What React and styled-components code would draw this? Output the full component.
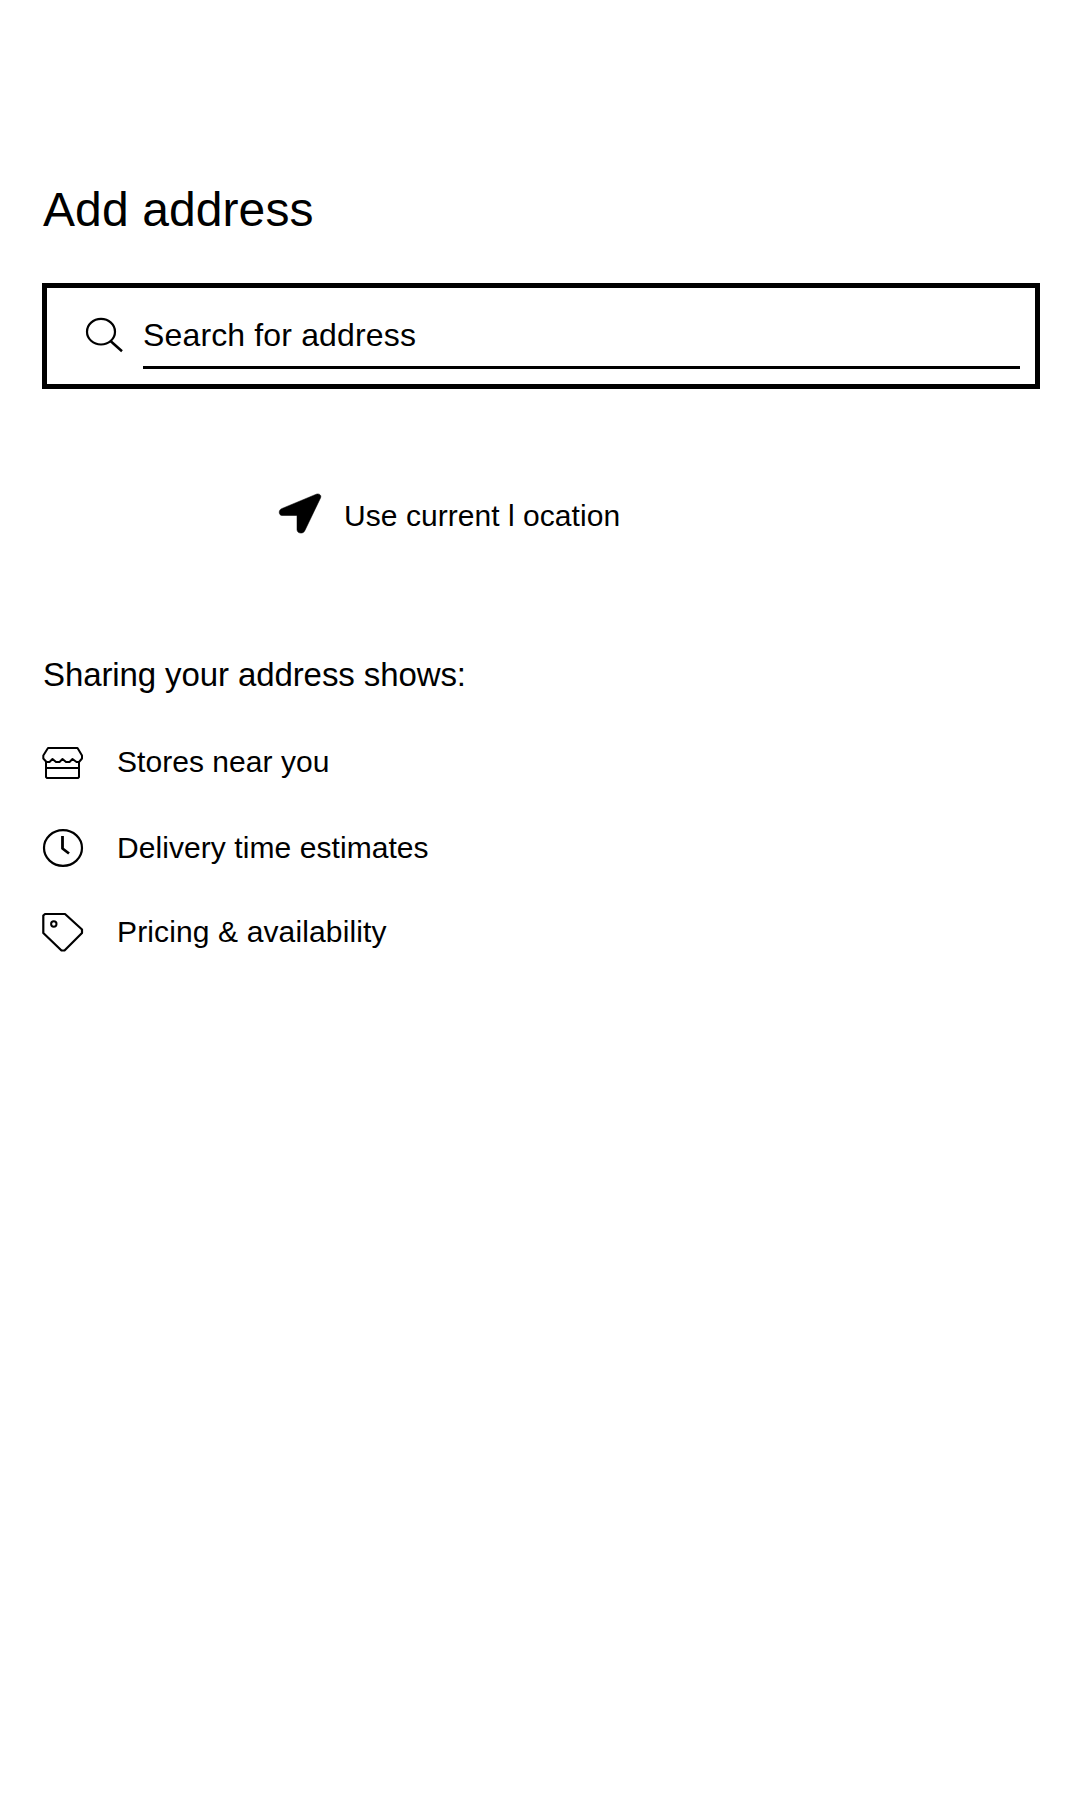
import React from "react";
import styled, { createGlobalStyle } from "styled-components";

const GlobalStyle = createGlobalStyle`
  * { box-sizing: border-box; }
  body { margin: 0; background: #fff; }
`;

const Page = styled.main`
  display: flex;
  flex-direction: column;
  min-height: 1800px;
  padding: 182px 40px 0 42px;
  background: #fff;
  color: #000;
  font-family: "Liberation Sans", Arial, sans-serif;
`;

const Title = styled.h1`
  margin: 0 0 45px 1px;
  font-size: 48px;
  line-height: 56px;
  font-weight: 400;
  letter-spacing: 0.1px;
  white-space: nowrap;
`;

const SearchBox = styled.div`
  display: flex;
  align-items: flex-start;
  gap: 20px;
  height: 106px;
  padding: 29px 15px 0 38px;
  border: 5px solid #000;
`;

const SearchField = styled.div`
  flex: 1;
  height: 52px;
  border-bottom: 3px solid #000;
`;

const Label = styled.span`
  display: block;
  font-size: ${(p) => p.$size || 30}px;
  line-height: 36px;
  letter-spacing: ${(p) => p.$spacing || 0}px;
  white-space: nowrap;
`;

const LocationButton = styled.button`
  display: flex;
  align-items: flex-start;
  gap: 23px;
  margin: 104px 0 0 237px;
  padding: 0;
  border: 0;
  background: none;
  color: inherit;
  font-family: inherit;
  text-align: left;
  height: 41px;

  ${Label} { margin-top: 5px; }
`;

const Subtitle = styled.h2`
  margin: 122px 0 0 1px;
  font-size: 33px;
  line-height: 38px;
  font-weight: 400;
  letter-spacing: -0.1px;
  white-space: nowrap;
`;

const Benefits = styled.ul`
  display: flex;
  flex-direction: column;
  margin: 52px 0 0;
  padding: 0;
  list-style: none;
`;

const Benefit = styled.li`
  display: flex;
  align-items: flex-start;
  gap: 33px;
  height: ${(p) => p.$height}px;

  ${Label} { margin-top: ${(p) => p.$drop}px; }
`;

const Icon = styled.svg`
  display: block;
  flex: none;
  overflow: visible;
  fill: none;
  stroke: #000;
  stroke-width: 2.2;
  stroke-linejoin: round;
`;

const SearchIcon = () => (
  <Icon width="38" height="36" viewBox="0 0 38 36">
    <ellipse cx="16" cy="14.7" rx="14" ry="12.8" />
    <path d="M25.5 24L37 34.3" strokeWidth="2.5" />
  </Icon>
);

const ArrowIcon = () => (
  <Icon width="42" height="41" viewBox="0 0 42 41">
    <path
      d="M37.3 1.2L2.5 15.7C-.8 17.2-.3 22.5 3 22.5H18V36.5C18 40.8 24.3 41.3 25.8 37.7L41.5 5C42.8 2.2 40.2 .2 37.3 1.2Z"
      fill="#000"
      stroke="#000"
      strokeWidth="0.5"
    />
  </Icon>
);

const StoreIcon = () => (
  <Icon width="42" height="34" viewBox="0 0 42 34">
    <path
      d="M6 2H35.5L40 9.5V12.5L37 16H34.5L30.5 13L27.5 16H24L20.5 13L17.5 16H14L10.5 13L7.5 16H4.5L1.3 12.5V9.5Z"
      strokeWidth="2"
    />
    <path d="M4 16V31L5 32H36L37 31V16M4 22H37" strokeWidth="2" />
  </Icon>
);

const ClockIcon = () => (
  <Icon width="42" height="40" viewBox="0 0 42 40">
    <ellipse cx="21" cy="20" rx="19" ry="17.8" />
    <path d="M20.5 8V20.5L27 25.5" strokeWidth="2.8" />
  </Icon>
);

const TagIcon = () => (
  <Icon width="42" height="41" viewBox="0 0 42 41">
    <path d="M3 2H23L40 17.5V21L22.5 38.5H19.5L1.3 21V3.5Z" />
    <ellipse cx="11.8" cy="12" rx="2.7" ry="2.7" strokeWidth="2" />
  </Icon>
);

const benefits = [
  { icon: StoreIcon, text: "Stores near you", height: 82, drop: -2, spacing: 0.04 },
  { icon: ClockIcon, text: "Delivery time estimates", height: 84, drop: 2, spacing: 0.07 },
  { icon: TagIcon, text: "Pricing & availability", height: 42, drop: 2, spacing: 0.13 },
];

export default function App() {
  return (
    <>
      <GlobalStyle />
      <Page>
        <Title>Add address</Title>
        <SearchBox>
          <SearchIcon />
          <SearchField>
            <Label $size={32} $spacing={0.15}>Search for address</Label>
          </SearchField>
        </SearchBox>
        <LocationButton>
          <ArrowIcon />
          <Label $spacing={0.05}>Use current l ocation</Label>
        </LocationButton>
        <Subtitle>Sharing your address shows:</Subtitle>
        <Benefits>
          {benefits.map(({ icon: Glyph, text, height, drop, spacing }) => (
            <Benefit key={text} $height={height} $drop={drop}>
              <Glyph />
              <Label $spacing={spacing}>{text}</Label>
            </Benefit>
          ))}
        </Benefits>
      </Page>
    </>
  );
}
